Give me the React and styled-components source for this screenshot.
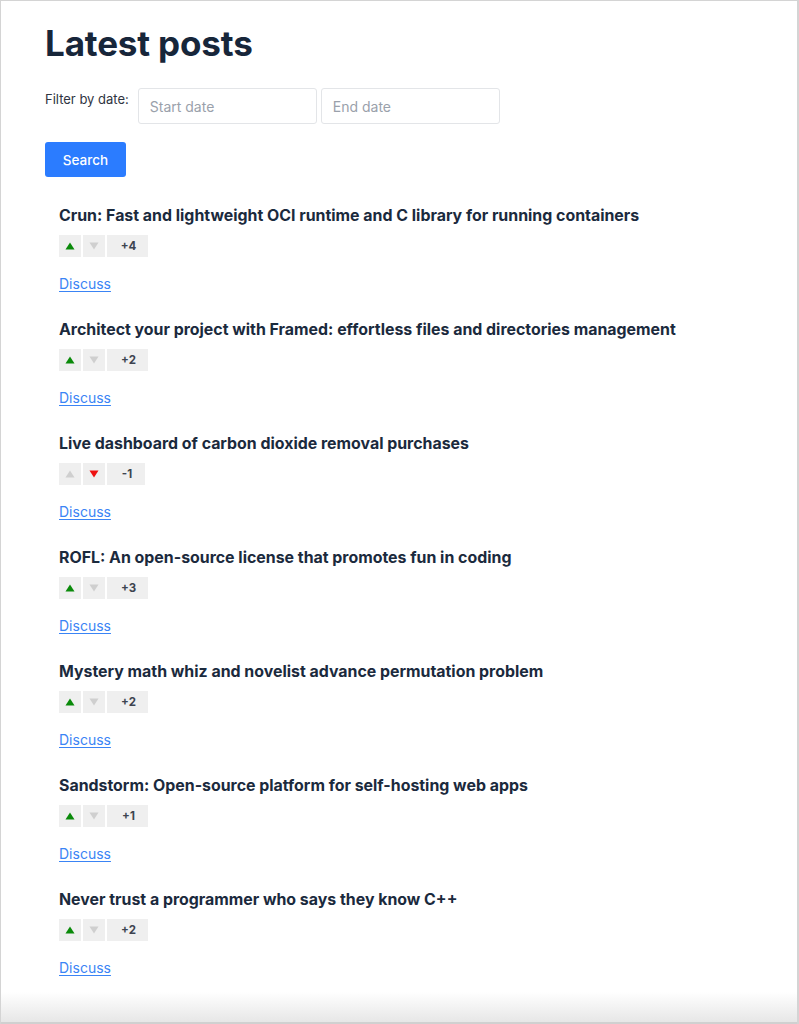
import React from "react";
import styled, { createGlobalStyle } from "styled-components";

const Global = createGlobalStyle`
  html, body { margin: 0; padding: 0; background: #fff; }
  body { font-family: Inter, "Noto Sans", sans-serif; color: #1b2a3d; }
  * { box-sizing: border-box; }
`;

const Frame = styled.div`
  position: relative;
  width: 799px;
  height: 1024px;
  border: 1px solid #d4d4d4;
  border-right-width: 2px;
  border-bottom: none;
  overflow: hidden;
  padding: 22px 44px 0 44px;
  &::after {
    content: "";
    position: absolute;
    left: 0;
    right: 0;
    bottom: 0;
    height: 30px;
    background: linear-gradient(to bottom, rgba(240,240,240,0), rgba(228,228,228,0.9));
    border-bottom: 2px solid #d0d0d0;
  }
`;

const Title = styled.h1`
  margin: 0;
  font-size: 35px;
  line-height: 40px;
  font-weight: 700;
  color: #17263a;
  letter-spacing: -0.15px;
`;

const FilterRow = styled.div`
  display: flex;
  align-items: flex-start;
  gap: 4px;
  margin-top: 25px;
`;

const FilterLabel = styled.label`
  font-size: 13px;
  color: #2f3542;
  line-height: 22px;
  margin-right: 5px;
`;

const DateInput = styled.input`
  width: 179px;
  height: 36px;
  border: 1px solid #e3e5e8;
  border-radius: 3px;
  padding: 0 11px;
  font-family: Inter, sans-serif;
  font-size: 14px;
  color: #333;
  background: #fff;
  &::placeholder { color: #9aa1ab; }
`;

const SearchButton = styled.button`
  display: block;
  margin-top: 18px;
  width: 81px;
  height: 35px;
  border: none;
  border-radius: 3px;
  background: #2b7cff;
  color: #fff;
  font-family: Inter, sans-serif;
  font-size: 13.5px;
  font-weight: 500;
`;

const PostList = styled.div`
  padding-left: 14px;
  margin-top: 29px;
`;

const Post = styled.article`
  height: 114px;
`;

const PostTitle = styled.h2`
  margin: 0;
  font-size: 15.9px;
  line-height: 20px;
  font-weight: 700;
  color: #1b2a3d;
`;

const Votes = styled.div`
  display: flex;
  gap: 2px;
  margin-top: 9px;
  height: 22px;
`;

const VoteButton = styled.span`
  width: 22px;
  height: 22px;
  background: #efefef;
  display: flex;
  align-items: center;
  justify-content: center;
`;

const Score = styled.span`
  width: ${(p) => p.$w}px;
  height: 22px;
  background: #efefef;
  display: flex;
  align-items: center;
  justify-content: center;
  font-size: 11.5px;
  font-weight: 700;
  color: #3d4450;
  padding-left: 2px;
`;

const Discuss = styled.a`
  display: inline-block;
  margin-top: 18px;
  font-size: 14px;
  line-height: 18px;
  color: #3a84f5;
  text-decoration: underline;
  text-underline-offset: 2px;
`;

const Tri = ({ up, color }) => (
  <svg width="10" height="8" viewBox="0 0 10 8">
    {up ? (
      <polygon points="5,0.5 9.5,7.5 0.5,7.5" fill={color} />
    ) : (
      <polygon points="0.5,0.5 9.5,0.5 5,7.5" fill={color} />
    )}
  </svg>
);

const posts = [
  { t: "Crun: Fast and lightweight OCI runtime and C library for running containers", s: "+4", v: 1 },
  { t: "Architect your project with Framed: effortless files and directories management", s: "+2", v: 1 },
  { t: "Live dashboard of carbon dioxide removal purchases", s: "-1", v: -1 },
  { t: "ROFL: An open-source license that promotes fun in coding", s: "+3", v: 1 },
  { t: "Mystery math whiz and novelist advance permutation problem", s: "+2", v: 1 },
  { t: "Sandstorm: Open-source platform for self-hosting web apps", s: "+1", v: 1 },
  { t: "Never trust a programmer who says they know C++", s: "+2", v: 1 },
];

export default function App() {
  return (
    <>
      <Global />
      <Frame>
        <Title>Latest posts</Title>
        <FilterRow>
          <FilterLabel>Filter by date:</FilterLabel>
          <DateInput placeholder="Start date" />
          <DateInput placeholder="End date" />
        </FilterRow>
        <SearchButton>Search</SearchButton>
        <PostList>
          {posts.map((p, i) => (
            <Post key={i}>
              <PostTitle>{p.t}</PostTitle>
              <Votes>
                <VoteButton>
                  <Tri up color={p.v === 1 ? "#0a8a0a" : "#cfcfcf"} />
                </VoteButton>
                <VoteButton>
                  <Tri color={p.v === -1 ? "#ee1111" : "#cfcfcf"} />
                </VoteButton>
                <Score $w={p.v === -1 ? 38 : 41}>{p.s}</Score>
              </Votes>
              <Discuss href="#">Discuss</Discuss>
            </Post>
          ))}
        </PostList>
      </Frame>
    </>
  );
}
